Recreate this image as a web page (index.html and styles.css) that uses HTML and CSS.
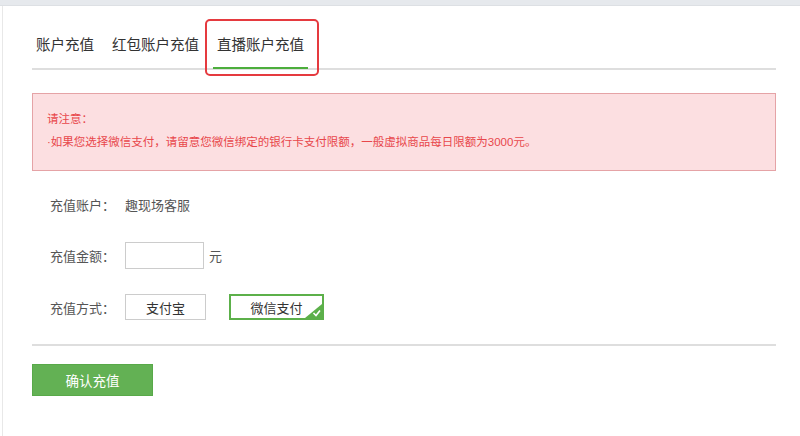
FILE: index.html
```html
<!DOCTYPE html>
<html lang="zh-CN">
<head>
  <meta charset="UTF-8">
  <meta name="viewport" content="width=device-width, initial-scale=1.0">
  <title>直播账户充值</title>
  <link rel="stylesheet" href="styles.css">
</head>
<body>
  <!-- Top Strip -->
  <div class="topbar"></div>

  <div class="page">
    <!-- Tabs -->
    <div class="tabs">
      <a class="tab" href="#">账户充值</a>
      <a class="tab" href="#">红包账户充值</a>
      <a class="tab active" href="#">直播账户充值<span class="mark"></span></a>
    </div>

    <!-- Notice -->
    <div class="notice">
      <p>请注意：</p>
      <p>·如果您选择微信支付，请留意您微信绑定的银行卡支付限额，一般虚拟商品每日限额为3000元。</p>
    </div>

    <!-- Recharge Form -->
    <form class="recharge" id="rechargeForm">
      <div class="row">
        <span class="label">充值账户：</span>
        <span class="value">趣现场客服</span>
      </div>
      <div class="row">
        <label class="label" for="amount">充值金额：</label>
        <input type="text" id="amount" class="amount" />
        <span class="unit">元</span>
      </div>
      <div class="row">
        <span class="label">充值方式：</span>
        <div class="methods">
          <button type="button" class="method">支付宝</button>
          <button type="button" class="method selected">微信支付
            <svg class="check" width="17" height="14" viewBox="0 0 17 14">
              <polygon points="17,0 17,14 0,14" fill="#5cb04a" />
              <polyline points="8.5,9 11,11.5 15,6.5" fill="none" stroke="#fff" stroke-width="1.6" />
            </svg>
          </button>
        </div>
      </div>
    </form>

    <div class="divider"></div>

    <button type="submit" form="rechargeForm" class="submit">确认充值</button>
  </div>
</body>
</html>
```

FILE: styles.css
```css
/* Global Styles */
body {
  margin: 0;
  background: #fff;
  color: #333;
  font-family: "Liberation Sans", "Noto Sans CJK SC", sans-serif;
}

.topbar {
  height: 5px;
  background: #e6e9ed;
  border-bottom: 1px solid #dde0e4;
}

.page {
  margin-left: 2px;
  border-left: 1px solid #e8e8e8;
  padding: 0 24px 0 29px;
  min-height: calc(100vh - 6px);
}

/* Tabs */
.tabs {
  display: flex;
  gap: 10px;
  padding-top: 29px;
  border-bottom: 2px solid #dedede;
}

.tab {
  position: relative;
  padding: 0 4px 12px;
  margin-bottom: -1px;
  font-size: 14.5px;
  line-height: 20px;
  color: #333;
  text-decoration: none;
  border-bottom: 2px solid transparent;
}

.tab.active {
  border-bottom-color: #4cae3c;
}

/* red annotation round the active tab */
.tab .mark {
  position: absolute;
  top: -16px;
  left: -8px;
  right: -11px;
  bottom: -9px;
  border: 2px solid #e53a3f;
  border-radius: 5px;
}

/* Notice */
.notice {
  margin-top: 23px;
  padding: 15px 14px 18px;
  background: #fcdfe1;
  border: 1px solid #e5a3a6;
  color: #e8474b;
  font-size: 11.5px;
}

.notice p {
  margin: 0;
  line-height: 20px;
}

.notice p + p {
  margin-top: 3px;
}

/* Form */
.recharge {
  display: flex;
  flex-direction: column;
  gap: 25px;
  padding: 20px 0 0 18px;
  font-size: 13px;
  color: #555;
}

.row {
  display: flex;
  align-items: center;
  min-height: 26px;
}

.label {
  width: 75px;
}

.value {
  color: #555;
}

.amount {
  box-sizing: border-box;
  width: 79px;
  height: 27px;
  margin: 0;
  border: 1px solid #ccc;
  padding: 0 6px;
  font-size: 13px;
  outline: none;
}

.unit {
  margin-left: 5px;
}

.methods {
  display: flex;
  gap: 23px;
}

.method {
  position: relative;
  height: 26px;
  padding: 0 20px;
  border: 1px solid #ccc;
  background: #fff;
  color: #333;
  font-family: inherit;
  font-size: 13px;
  cursor: pointer;
}

.method.selected {
  border: 2px solid #5cb04a;
  padding: 0 19.5px;
}

.method .check {
  position: absolute;
  right: 0;
  bottom: 0;
}

.divider {
  margin-top: 24px;
  height: 2px;
  background: #dedede;
}

/* Submit */
.submit {
  display: block;
  margin-top: 18px;
  width: 121px;
  height: 32px;
  border: 1px solid #58a949;
  background: #63b154;
  color: #fff;
  font-family: inherit;
  font-size: 13.5px;
  cursor: pointer;
}

.submit:hover {
  background: #57a548;
}
```
